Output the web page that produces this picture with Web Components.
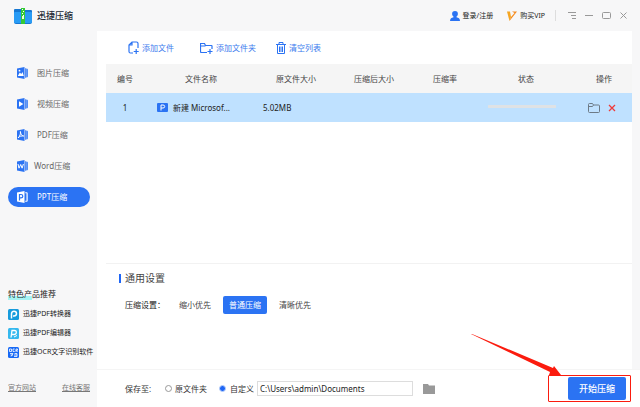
<!DOCTYPE html>
<html lang="zh-CN">
<head>
<meta charset="utf-8">
<title>迅捷压缩</title>
<style>
  html, body { margin: 0; }
  body {
    --blue: #2b73f3;
    --chrome: #f7f7f8;
    font: 8px/12px "Noto Sans", "Noto Sans CJK SC", sans-serif;
    color: #333;
    background: #fff;
  }
</style>
</head>
<body>
<compress-app></compress-app>

<script>
const define = (name, html) => {
  const tpl = document.createElement('template');
  tpl.innerHTML = `<style>
    *, ::before, ::after { box-sizing: border-box; }
    button { font: inherit; color: inherit; border: 0; padding: 0; margin: 0; background: none; white-space: nowrap; cursor: pointer; }
    svg { display: block; flex: none; }
  </style>` + html;
  customElements.define(name, class extends HTMLElement {
    constructor() {
      super();
      this.attachShadow({ mode: 'open' }).append(tpl.content.cloneNode(true));
    }
  });
};

define('title-bar', `
<style>
  :host { display: flex; align-items: center; height: 31px; padding: 0 12px 0 14px; background: var(--chrome); }
  h1 { margin: 0 auto 0 5px; font-size: 9px; line-height: 14px; font-weight: 500; color: #222a35; }
  button { display: flex; align-items: center; gap: 3px; font-size: 7px; color: #222; }
  .vip { margin-left: 14px; }
  i { width: 1px; height: 11px; background: #ddd; margin: 0 12px 0 10px; }
  .win { display: flex; gap: 8px; }
  .win svg { fill: none; stroke: #999; }
</style>
<svg width="18" height="16" viewBox="0 0 18 16">
  <path d="M1 1h6l1 1h9q1 0 1 1v11q0 2-2 2H2q-2 0-2-2V2q0-1 1-1z" fill="#1677d2"/>
  <path d="M0 5q0-1 1-1h16q1 0 1 1v9q0 1-1 1H1q-1 0-1-1z" fill="#289bf5"/>
  <path d="M7 0h4v16H7z" fill="#35c936"/>
  <path d="M8 1h1v1H8zM9 3h1v1H9zM8 5h1v1H8zM9 7h1v1H9z" fill="#fff"/>
  <path d="M8 8h2v3H8z" fill="#e9fbdc"/>
</svg>
<h1>迅捷压缩</h1>
<button>
  <svg width="10" height="10" viewBox="0 0 10 10" fill="#2b73f3"><path d="M5 0c2 0 3 1.200 2.900 2.900C7.800 4.500 7 5 6.500 5.600v.7C8.500 6.800 10 7.500 10 10H0c0-2.500 1.500-3.200 3.500-3.700v-.7C3 5 2.200 4.500 2.100 2.900 2 1.200 3 0 5 0z"/></svg>
  <span>登录/注册</span>
</button>
<button class="vip">
  <svg width="10" height="10" viewBox="0 0 10 10"><path d="M0 .5h3l1 5.500L2.500 10z" fill="#f5a623"/><path d="M5 .5h5L2.500 10 4 6l3.500-4z" fill="#f68b1e"/></svg>
  <span>购买VIP</span>
</button>
<i></i>
<div class="win">
  <button aria-label="菜单"><svg width="9" height="9" viewBox="0 0 9 9"><path d="M0 1.500h8M3 4.500h5M4 7.500h4"/></svg></button>
  <button aria-label="最小化"><svg width="9" height="9" viewBox="0 0 9 9"><path d="M0 4.500h8"/></svg></button>
  <button aria-label="最大化"><svg width="9" height="9" viewBox="0 0 9 9"><rect x=".5" y="1.500" width="8" height="6" rx="1"/></svg></button>
  <button aria-label="关闭"><svg width="9" height="9" viewBox="0 0 9 9"><path d="M1.500 1.500l6 6M7.500 1.500l-6 6"/></svg></button>
</div>`);

define('nav-item', `
<style>
  :host { display: block; color: #666; }
  button { display: flex; align-items: center; width: 100%; height: 20px; border-radius: 10px; padding-left: 8px; gap: 9px; }
  :host([wide]) button { gap: 6px; }
  :host([current]) { color: #fff; }
  :host([current]) button { background: var(--blue); }
</style>
<button><slot name="icon"></slot><span><slot></slot></span></button>`);

define('side-bar', `
<style>
  :host { display: flex; flex-direction: column; width: 97px; padding: 32px 7px 13px 8px; background: var(--chrome); }
  nav { display: grid; gap: 11px; }
  h2 { align-self: flex-start; margin: auto 0 8px; font-size: 8px; line-height: 12px; font-weight: 400; color: #222; background: linear-gradient(#0000 8px, #a5f3f3 8px 12px) no-repeat 0 0 / 24px 12px; }
  ul { list-style: none; margin: 0; padding: 0; display: grid; gap: 7px; font-size: 7px; color: #222; }
  li { display: flex; align-items: center; gap: 4px; height: 12px; white-space: nowrap; }
  footer { display: flex; justify-content: space-between; margin-top: 24px; font-size: 7px; }
  a { color: #777; }
  nav svg { fill: #2b73f3; }
  nav-item[current] svg { fill: #fff; }
</style>
<nav>
  <nav-item><svg slot="icon" width="12" height="12" viewBox="0 0 12 12"><path d="M1 1.500L8.500 0v12L1 10.500zM9 1.200h.8v9.600H9zM10.300 1.500q1.500 0 1.500 1v7q0 1-1.500 1z"/><path d="M1.800 9l2-3.500 1.500 1.500L6.500 5l1.300 4z" fill="#fff"/><circle cx="3.500" cy="3.700" r=".9" fill="#fff"/></svg>图片压缩</nav-item>
  <nav-item><svg slot="icon" width="12" height="12" viewBox="0 0 12 12"><path d="M1 1.500L8.500 0v12L1 10.500zM9 1.200h.8v9.600H9zM10.300 1.500q1.500 0 1.500 1v7q0 1-1.500 1z"/><path d="M3 3.300v5.400L7.300 6z" fill="#fff"/></svg>视频压缩</nav-item>
  <nav-item><svg slot="icon" width="12" height="12" viewBox="0 0 12 12"><path d="M1 1.500L8.500 0v12L1 10.500zM9 1.200h.8v9.600H9zM10.300 1.500q1.500 0 1.500 1v7q0 1-1.500 1z"/><path d="M2 9C4 7 4.700 5 4.400 2.500 4.700 5 5.500 6.500 7.700 7 5.500 6.700 3.500 7.200 2 9z" fill="none" stroke="#fff"/></svg>PDF压缩</nav-item>
  <nav-item wide><svg slot="icon" width="12" height="12" viewBox="0 0 12 12"><path d="M1 1.500L8.500 0v12L1 10.500zM9 1.200h.8v9.600H9zM10.300 1.500q1.500 0 1.500 1v7q0 1-1.500 1z"/><path d="M2 4l1 4.200L4.700 4.500l1.400 3.700L7.400 4" fill="none" stroke="#fff"/></svg>Word压缩</nav-item>
  <nav-item current><svg slot="icon" width="12" height="12" viewBox="0 0 12 12"><path d="M1 1.500L8.500 0v12L1 10.500zM9.200 1.200h1.500q1 0 1 1v7.600q0 1-1 1H9.200v-1h1.300V2.200H9.200z"/><path d="M3.500 9.500V3.500H5q1.800 0 1.800 1.700T5 6.900H3.500" fill="none" stroke="#2b73f3" stroke-width="1.200"/></svg>PPT压缩</nav-item>
</nav>
<h2>特色产品推荐</h2>
<ul>
  <li><svg width="11" height="11" viewBox="0 0 11 11"><rect width="11" height="11" rx="1.500" fill="#179bdc"/><path d="M3.500 9.500V5q0-2.800 2.500-2.800T8.500 4.600 6 7H5" fill="none" stroke="#fff" stroke-width="1.500"/></svg><span>迅捷PDF转换器</span></li>
  <li><svg width="11" height="11" viewBox="0 0 11 11"><rect width="11" height="11" rx="1.500" fill="#35b8ee"/><path d="M3 9.500L4 2.500h2.500q2 0 1.800 2T6 6.500H3.600" fill="none" stroke="#fff" stroke-width="1.300"/><path d="M6 9l3-1.500" stroke="#fff"/></svg><span>迅捷PDF编辑器</span></li>
  <li><svg width="11" height="11" viewBox="0 0 11 11"><rect width="11" height="11" rx="1.500" fill="#1769f5"/><path d="M1.500 2h2v2.500h-2zM6.700 2H5v2.500h1.700M8 5V2h1.500v1.300H8l1.700 1.700M2 6.500h3L3 9.500M2.500 8H5M6 9.500h3v-3H6.500M6 8h3" fill="none" stroke="#fff" stroke-width=".8"/></svg><span>迅捷OCR文字识别软件</span></li>
</ul>
<footer><a href="#site">官方网站</a><a href="#service">在线客服</a></footer>`);

define('tool-bar', `
<style>
  :host { display: flex; align-items: center; gap: 26px; height: 33px; padding-left: 31px; color: #3b7bee; }
  button { display: flex; align-items: center; gap: 3px; }
  button:last-child { margin-left: -6px; }
  svg { fill: none; stroke: #2b73f3; }
</style>
<button><svg width="11" height="13" viewBox="0 0 11 13"><path d="M5 12H2.500q-1.500 0-1.500-1.500V4l3-3h4.500Q10 1 10 2.500V7M1 4h3V1M8.200 8v5M5.700 10.500h5" stroke-width="1.200"/></svg><span>添加文件</span></button>
<button><svg width="13" height="12" viewBox="0 0 13 12"><path d="M7 10.500H1.500q-1 0-1-1v-8h4l1 2h6q.5 0 .5.500v3M.5 4h5M10 7v5M7.500 9.500h5" stroke-width="1.200"/></svg><span>添加文件夹</span></button>
<button><svg width="10" height="12" viewBox="0 0 10 12"><path d="M0 2.500h10M3 2V.5h4V2M1.500 3v8.500h7V3M3.500 4.500v5.500M5 4.500v5.500M6.500 4.500v5.500"/></svg><span>清空列表</span></button>`);

define('file-table', `
<style>
  :host { display: block; margin-left: 9px; }
  table { width: 100%; border-collapse: collapse; table-layout: fixed; }
  tr { height: 29px; }
  thead { background: #f5f5f5; color: #444; }
  th, td { padding: 0; font-weight: 400; text-align: center; white-space: nowrap; }
  tbody { background: #bfe1ff; color: #222; }
  td.size { text-align: left; padding-left: 5px; }
  .name { display: flex; align-items: center; gap: 5px; padding-left: 13px; }
  .ops { display: flex; align-items: center; justify-content: center; gap: 8px; padding-right: 4px; }
  progress { appearance: none; display: block; width: 68px; height: 3px; margin: 0 0 2px 12px; border: 0; border-radius: 1px; background: #dfe2e5; }
  progress::-webkit-progress-bar { background: #dfe2e5; border-radius: 1px; }
</style>
<table>
  <colgroup><col style="width:38px"><col style="width:114px"><col style="width:76px"><col style="width:80px"><col style="width:62px"><col><col style="width:56px"></colgroup>
  <thead><tr><th>编号</th><th>文件名称</th><th>原文件大小</th><th>压缩后大小</th><th>压缩率</th><th>状态</th><th>操作</th></tr></thead>
  <tbody><tr>
    <td>1</td>
    <td><div class="name"><svg width="11" height="9" viewBox="0 0 11 9"><rect width="11" height="9" rx="1" fill="#2b73f3"/><path d="M4 7.500V2h2q1.700 0 1.700 1.500T6 5H4" fill="none" stroke="#fff"/></svg><span>新建 Microsof...</span></div></td>
    <td class="size">5.02MB</td><td></td><td></td>
    <td><progress value="0" max="100" aria-label="压缩进度"></progress></td>
    <td><div class="ops">
      <button aria-label="打开文件夹"><svg width="12" height="10" viewBox="0 0 12 10"><path d="M.5 1.500q0-1 1-1h3l1 1.500H10.500q1 0 1 1v5.500q0 1-1 1h-9q-1 0-1-1zM5.500 2L4.500 3.500H1" fill="none" stroke="#6d7a86"/></svg></button>
      <button aria-label="删除"><svg width="8" height="8" viewBox="0 0 8 8"><path d="M1 1l6 6M7 1L1 7" stroke="#ee3b3b" stroke-width="1.300"/></svg></button>
    </div></td>
  </tr></tbody>
</table>`);

define('settings-panel', `
<style>
  :host { display: block; height: 106px; margin: auto 0 0 9px; padding: 7px 0 0 13px; border-top: 1px solid #f2f2f2; }
  h2 { display: flex; align-items: center; gap: 4px; margin: 0; font-size: 10px; line-height: 14px; font-weight: 400; color: #444; }
  h2::before { content: ""; width: 2px; height: 9px; background: #1f66f5; }
  .modes { display: flex; align-items: center; margin-top: 11px; padding-left: 6px; color: #222; }
  .modes > span { width: 48px; white-space: nowrap; }
  button { height: 18px; width: 44px; border-radius: 2px; color: #444; margin-right: 6px; }
  button[aria-pressed=true] { background: var(--blue); color: #fff; }
</style>
<h2>通用设置</h2>
<div class="modes" role="group" aria-label="压缩设置">
  <span>压缩设置：</span>
  <button aria-pressed="false">缩小优先</button><button aria-pressed="true">普通压缩</button><button aria-pressed="false">清晰优先</button>
</div>`);

define('callout-mark', `
<style>
  :host { display: flex; justify-content: flex-end; position: relative; width: 83px; padding: 1px 4px 1px 0; border: 1px solid #fb1b0e; border-radius: 1px; }
  svg { position: absolute; right: 68px; bottom: 25px; pointer-events: none; }
</style>
<slot></slot>
<svg width="91" height="42" viewBox="0 0 91 42"><path d="M0 0L1 0 82 34 83 32 90 41 78 41 79 38z" fill="#fb1b0e"/></svg>`);

define('save-bar', `
<style>
  :host { display: flex; align-items: center; height: 38px; padding: 0 9px 0 28px; border-top: 1px solid #f5f5f5; background: #fff; }
  .label { width: 40px; }
  label { display: flex; align-items: center; gap: 3px; white-space: nowrap; margin-right: 12px; }
  label + label { margin-right: 3px; gap: 4px; }
  input[type=radio] { appearance: none; width: 7px; height: 7px; margin: 0; border: 1px solid #999; border-radius: 50%; background: #fff; }
  input[type=radio]:checked { border-color: #bcd2fa; background: #1f66f5; }
  input[type=text] { width: 156px; height: 15px; padding: 0 2px; font: inherit; font-size: 8px; color: #222; border: 1px solid #ddd; background: #fff; }
  .browse { margin: 0 auto 0 10px; }
  .start { width: 58px; height: 23px; border-radius: 2px; background: var(--blue); color: #fff; font-size: 9px; font-weight: 500; }
</style>
<span class="label">保存至:</span>
<label><input type="radio" name="dest"><span>原文件夹</span></label>
<label><input type="radio" name="dest" checked><span>自定义</span></label>
<input type="text" aria-label="保存路径" value="C:\\Users\\admin\\Documents">
<button class="browse" aria-label="浏览"><svg width="12" height="10" viewBox="0 0 12 10"><path d="M0 0h5l1 1.500h6V10H0z" fill="#999"/></svg></button>
<callout-mark><button class="start">开始压缩</button></callout-mark>`);

define('compress-app', `
<style>
  :host { display: flex; flex-direction: column; min-height: 100vh; }
  .body { display: flex; flex: 1; }
  .main { display: flex; flex-direction: column; flex: 1; min-width: 0; background: var(--chrome); }
  main { display: flex; flex-direction: column; flex: 1; margin-right: 8px; background: #fff; }
</style>
<title-bar></title-bar>
<div class="body">
  <side-bar></side-bar>
  <div class="main">
    <main>
      <tool-bar></tool-bar>
      <file-table></file-table>
      <settings-panel></settings-panel>
    </main>
    <save-bar></save-bar>
  </div>
</div>`);
</script>
</body>
</html>
